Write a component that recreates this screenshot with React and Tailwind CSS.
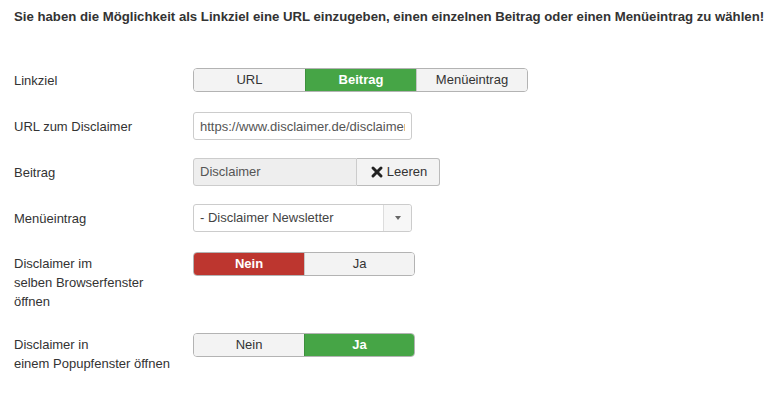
import React from "react";
import { X } from "lucide-react";

const font = { fontFamily: '"Liberation Sans", Arial, sans-serif' };

const Segmented = ({ options, active, tone, width }) => (
  <div className="flex rounded-[4px] border border-[#b3b3b3] overflow-hidden h-[24px]">
    {options.map((o, i) => {
      const on = i === active;
      const color = tone === "red" ? "bg-[#bd362f] border-[#a9302a]" : "bg-[#46a546] border-[#3d903d]";
      return (
        <div
          key={o}
          className={
            "flex items-center justify-center text-[13px] " +
            width +
            (i > 0 ? " border-l " : " ") +
            (on ? color + " text-white font-bold" : "bg-[#f3f3f3] border-[#c6c6c6] text-[#333]")
          }
        >
          {o}
        </div>
      );
    })}
  </div>
);

const Row = ({ label, children, multi, className = "" }) => (
  <div className={"flex " + (multi ? "items-start " : "items-center ") + className}>
    <div className={"w-[179px] shrink-0 text-[13px] leading-[19px] text-[#333] " + (multi ? "pt-[2px]" : "")}>
      {label}
    </div>
    {children}
  </div>
);

export default function App() {
  return (
    <div className="bg-white w-[778px] h-[399px] px-[14px] pt-[8px]" style={font}>
      <p className="text-[13.2px] font-bold leading-[18px] text-[#333] whitespace-nowrap">
        Sie haben die Möglichkeit als Linkziel eine URL einzugeben, einen einzelnen Beitrag oder einen Menüeintrag zu wählen!
      </p>

      <div className="mt-[42px] flex flex-col">
        <Row label="Linkziel">
          <Segmented options={["URL", "Beitrag", "Menüeintrag"]} active={1} width="w-[111px]" />
        </Row>

        <Row label="URL zum Disclaimer" className="mt-[20px]">
          <input
            readOnly
            value="https://www.disclaimer.de/disclaimer"
            className="w-[219px] h-[28px] rounded-[3px] border border-[#ccc] bg-white px-[6px] text-[13px] text-[#555] outline-none"
            style={font}
          />
        </Row>

        <Row label="Beitrag" className="mt-[18px]">
          <div className="flex h-[28px]">
            <div className="w-[164px] flex items-center rounded-l-[3px] border border-[#ccc] bg-[#eeeeee] px-[6px] text-[13px] text-[#555]">
              Disclaimer
            </div>
            <div className="w-[83px] flex items-center justify-center gap-[2px] rounded-r-[3px] border border-l-0 border-[#bbb] bg-[#f3f3f3] text-[13px] text-[#333]">
              <X size={16} strokeWidth={4.5} className="text-[#222]" />
              Leeren
            </div>
          </div>
        </Row>

        <Row label="Menüeintrag" className="mt-[18px]">
          <div className="w-[219px] h-[28px] flex rounded-[3px] border border-[#ccc] bg-white">
            <div className="flex-1 flex items-center px-[6px] text-[13px] text-[#444]">- Disclaimer Newsletter</div>
            <div className="w-[28px] flex items-center justify-center border-l border-[#ddd] bg-[#f7f7f7] rounded-r-[3px]">
              <div className="w-0 h-0 border-l-[3px] border-r-[3px] border-t-[4px] border-l-transparent border-r-transparent border-t-[#666]" />
            </div>
          </div>
        </Row>

        <Row
          multi
          className="mt-[20px]"
          label={
            <>
              Disclaimer im
              <br />
              selben Browserfenster
              <br />
              öffnen
            </>
          }
        >
          <Segmented options={["Nein", "Ja"]} active={0} tone="red" width="w-[110px]" />
        </Row>

        <Row
          multi
          className="mt-[22px]"
          label={
            <>
              Disclaimer in
              <br />
              einem Popupfenster öffnen
            </>
          }
        >
          <Segmented options={["Nein", "Ja"]} active={1} width="w-[110px]" />
        </Row>
      </div>
    </div>
  );
}
